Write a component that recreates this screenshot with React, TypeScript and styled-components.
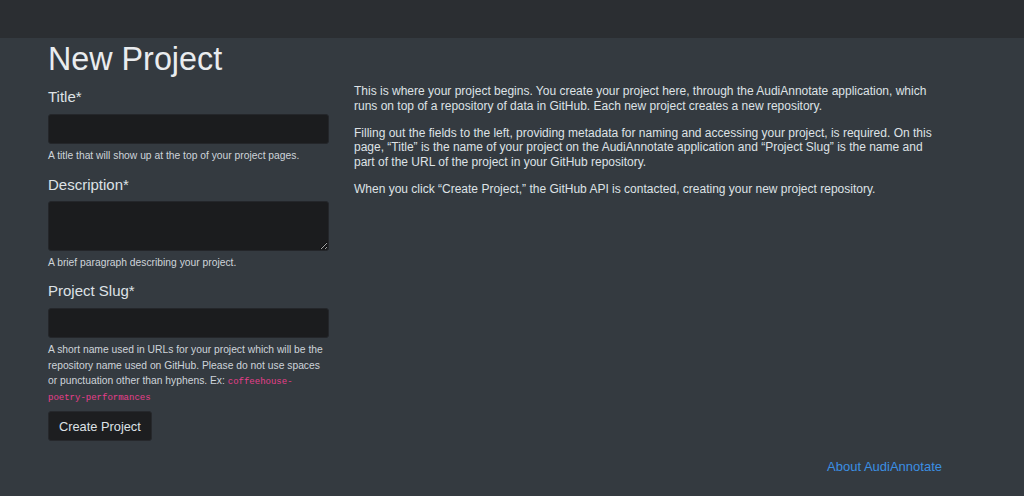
import { createGlobalStyle, styled } from "styled-components";

const GlobalStyle = createGlobalStyle`
    html, body {
        margin: 0;
        padding: 0;
        background: #343a40;
        font-family: "Liberation Sans", Arial, sans-serif;
        color: #dee2e6;
    }
`

const TopBar = styled.header`
    height: 38px;
    background: #2b2e32;
`

const Page = styled.main`
    width: 894px;
    margin-left: 48px;
    min-height: 458px;
`

const Heading = styled.h1`
    margin: 0;
    padding-top: 2px;
    font-size: 32.3px;
    line-height: 38px;
    font-weight: 400;
    color: #e9ecef;
`

const Columns = styled.div`
    display: flex;
    gap: 25px;
`

const FormColumn = styled.form`
    width: 281px;
    flex-shrink: 0;
`

const Field = styled.div`
    margin-top: ${p => (p.$first ? "10px" : "12px")};
`

const Label = styled.label`
    display: block;
    font-size: 15px;
    line-height: 18px;
    margin-bottom: 8px;
    color: #dee2e6;
`

const TextInput = styled.input`
    display: block;
    box-sizing: border-box;
    width: 100%;
    height: 30px;
    background: #1b1c1e;
    border: 1px solid #24262a;
    border-radius: 3px;
    color: #dee2e6;
`

const TextArea = styled.textarea`
    display: block;
    box-sizing: border-box;
    width: 100%;
    height: 50px;
    margin-top: -1px;
    background: #1b1c1e;
    border: 1px solid #24262a;
    border-radius: 3px;
    color: #dee2e6;
    resize: vertical;
`

const Help = styled.small`
    display: block;
    margin-top: 4px;
    font-size: 10.3px;
    line-height: 15.5px;
    color: #ced4da;

    code {
        font-family: "Liberation Mono", monospace;
        font-size: 9px;
        line-height: 12px;
        color: #e83e8c;
    }
`

const SubmitButton = styled.button`
    margin-top: 7px;
    height: 30px;
    padding: 0 10px;
    background: #1d1e20;
    border: 1px solid #26282c;
    border-radius: 3px;
    color: #dee2e6;
    font-family: "Liberation Sans", Arial, sans-serif;
    font-size: 12.8px;
`

const InfoColumn = styled.section`
    flex: 1;
    padding-top: 6px;

    p {
        margin: 0 0 12.5px;
        font-size: 12px;
        line-height: 14.5px;
        color: #dee2e6;
    }
`

const Footer = styled.footer`
    display: flex;
    justify-content: flex-end;
    margin-top: 18px;
`

const AboutLink = styled.a`
    font-size: 13px;
    color: #3b8fe3;
    text-decoration: none;
`

export default function App() {
    return (
        <>
            <GlobalStyle />
            <TopBar />
            <Page>
                <Heading>New Project</Heading>
                <Columns>
                    <FormColumn onSubmit={e => e.preventDefault()}>
                        <Field $first>
                            <Label htmlFor="title">Title*</Label>
                            <TextInput id="title" type="text" />
                            <Help>A title that will show up at the top of your project pages.</Help>
                        </Field>
                        <Field>
                            <Label htmlFor="description">Description*</Label>
                            <TextArea id="description" />
                            <Help>A brief paragraph describing your project.</Help>
                        </Field>
                        <Field>
                            <Label htmlFor="slug">Project Slug*</Label>
                            <TextInput id="slug" type="text" />
                            <Help>
                                A short name used in URLs for your project which will be the repository name used on
                                GitHub. Please do not use spaces or punctuation other than hyphens. Ex:{" "}
                                <code>coffeehouse-poetry-performances</code>
                            </Help>
                        </Field>
                        <SubmitButton type="submit">Create Project</SubmitButton>
                    </FormColumn>
                    <InfoColumn>
                        <p>
                            This is where your project begins. You create your project here, through the AudiAnnotate
                            application, which runs on top of a repository of data in GitHub. Each new project creates a
                            new repository.
                        </p>
                        <p>
                            Filling out the fields to the left, providing metadata for naming and accessing your project,
                            is required. On this page, “Title” is the name of your project on the AudiAnnotate application
                            and “Project Slug” is the name and part of the URL of the project in your GitHub repository.
                        </p>
                        <p>When you click “Create Project,” the GitHub API is contacted, creating your new project repository.</p>
                    </InfoColumn>
                </Columns>
                <Footer>
                    <AboutLink href="#">About AudiAnnotate</AboutLink>
                </Footer>
            </Page>
        </>
    )
}
